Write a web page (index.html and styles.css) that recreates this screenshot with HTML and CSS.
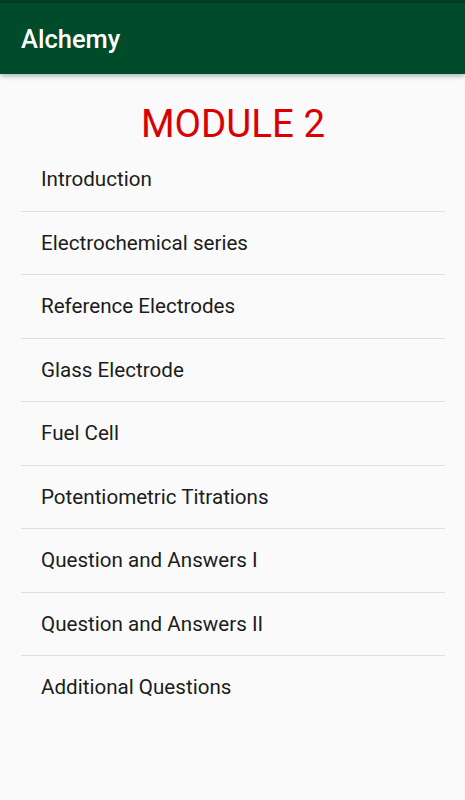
FILE: index.html
```html
<!DOCTYPE html>
<html lang="en">
<head>
  <meta charset="UTF-8" />
  <meta name="viewport" content="width=device-width, initial-scale=1.0" />
  <title>Alchemy</title>
  <link rel="stylesheet" href="styles.css">
</head>
<body>
  <header class="app-bar">
    <h1>Alchemy</h1>
  </header>

  <main class="content">
    <h2 class="module-title">MODULE 2</h2>
    <ul class="topic-list">
      <li class="topic-item">Introduction</li>
      <li class="topic-item">Electrochemical series</li>
      <li class="topic-item">Reference Electrodes</li>
      <li class="topic-item">Glass Electrode</li>
      <li class="topic-item">Fuel Cell</li>
      <li class="topic-item">Potentiometric Titrations</li>
      <li class="topic-item">Question and Answers I</li>
      <li class="topic-item">Question and Answers II</li>
      <li class="topic-item">Additional Questions</li>
    </ul>
  </main>
</body>
</html>
```

FILE: styles.css
```css
body {
  font-family: Roboto, 'Noto Sans', sans-serif;
  margin: 0;
  background-color: #fafafa;
  color: #1c1c1c;
}

.app-bar {
  height: 71px;
  background-color: #004b2a;
  border-top: 3px solid #003c20;
  display: flex;
  align-items: center;
  padding: 0 21px;
  box-shadow: 0 2px 5px rgba(0, 0, 0, 0.3);
}

.app-bar h1 {
  margin: 0;
  color: #ffffff;
  font-size: 25.5px;
  font-weight: 500;
}

.content {
  padding: 0 20px 0 21px;
}

.module-title {
  margin: 27px 0 2px;
  text-align: center;
  color: #db0000;
  font-size: 38.5px;
  font-weight: 400;
}

.topic-list {
  list-style: none;
  margin: 0;
  padding: 0;
}

.topic-item {
  padding: 19px 20px 19.5px;
  line-height: 24px;
  font-size: 20.6px;
  border-bottom: 1px solid #dedede;
}

.topic-item:last-child {
  border-bottom: none;
}
```
